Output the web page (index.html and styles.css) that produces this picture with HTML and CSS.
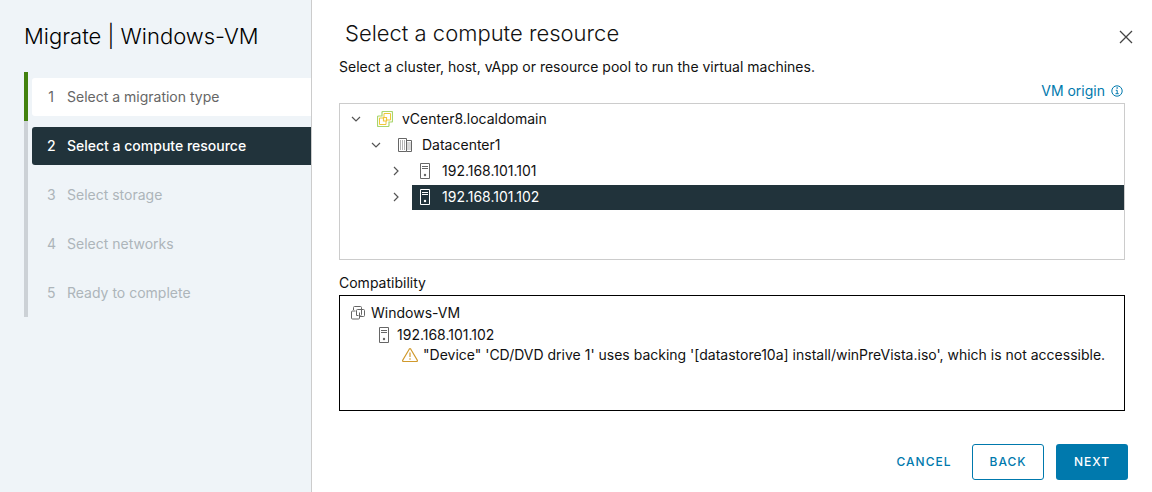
FILE: index.html
```html
<!DOCTYPE html>
<html lang="en">
<head>
<meta charset="utf-8">
<meta name="viewport" content="width=device-width, initial-scale=1">
<title>Migrate | Windows-VM</title>
<link rel="stylesheet" href="styles.css">
</head>
<body>
<svg class="sprite" aria-hidden="true">
  <symbol id="host" viewBox="0 0 16 16"><path d="M3.500 .5h9v15h-9z" fill="none" stroke="currentColor"/><path d="M5 3.500h6M5 5.500h6" stroke="currentColor"/><circle cx="8" cy="12" r="1.200" fill="currentColor"/></symbol>
  <symbol id="down" viewBox="0 0 10 10"><path d="M1 3l4 4 4-4" fill="none" stroke="currentColor" stroke-width="1.200"/></symbol>
  <symbol id="right" viewBox="0 0 10 10"><path d="M3 1l4 4-4 4" fill="none" stroke="currentColor" stroke-width="1.200"/></symbol>
</svg>
<div class="wizard">
  <aside class="sidebar">
    <h1 class="wizard-title">Migrate | Windows-VM</h1>
    <ol class="steps">
      <li class="step done"><button class="step-link" type="button"><span class="num">1</span>Select a migration type</button></li>
      <li class="step current"><button class="step-link" type="button" aria-current="step"><span class="num">2</span>Select a compute resource</button></li>
      <li class="step"><button class="step-link" type="button" disabled><span class="num">3</span>Select storage</button></li>
      <li class="step"><button class="step-link" type="button" disabled><span class="num">4</span>Select networks</button></li>
      <li class="step"><button class="step-link" type="button" disabled><span class="num">5</span>Ready to complete</button></li>
    </ol>
  </aside>
  <main class="page">
    <header class="page-head">
      <h2 class="page-title">Select a compute resource</h2>
      <button class="close" type="button" aria-label="Close"><svg width="14" height="14" viewBox="0 0 14 14"><path d="M1 1l12 12M13 1L1 13" stroke="currentColor" stroke-width="1.300"/></svg></button>
    </header>
    <section class="content">
      <p class="intro">Select a cluster, host, vApp or resource pool to run the virtual machines.</p>
      <div class="origin"><a class="origin-link" href="#origin">VM origin <svg width="12" height="12" viewBox="0 0 12 12" fill="none" stroke="currentColor"><circle cx="6" cy="6" r="5.200"/><path d="M4.800 5.300h1.400v3.200M4.500 8.700h3.200"/><path d="M5.500 3h1.300" stroke-width="1.300"/></svg></a></div>
      <ul class="tree" role="tree" aria-label="Inventory">
        <li class="node" role="treeitem" aria-expanded="true">
          <button class="toggle" type="button" aria-label="Collapse vCenter8.localdomain"><svg width="10" height="10"><use href="#down"/></svg></button>
          <span class="label"><svg width="16" height="16" viewBox="0 0 16 16" fill="none"><path d="M5 1.500q0-1 1-1h8.500q1 0 1 1V10q0 1-1 1H12v3.500q0 1-1 1H1.500q-1 0-1-1V6q0-1 1-1H5z" stroke="#a9d66c" stroke-width="1.200"/><path d="M9.500 9h4V2.500H7V6.500" stroke="#efc63a"/><path d="M6 7H2.500v6.500H9V10" stroke="#efc63a"/><path d="M6.500 6.500h3v3.500h-3z" stroke="#efc63a" stroke-width="1.200"/></svg>vCenter8.localdomain</span>
        </li>
        <li class="node level-2" role="treeitem" aria-expanded="true">
          <button class="toggle" type="button" aria-label="Collapse Datacenter1"><svg width="10" height="10"><use href="#down"/></svg></button>
          <span class="label icon-gray"><svg width="16" height="16" viewBox="0 0 16 16" fill="none" stroke="currentColor"><path d="M9.500 14.500h-8V1.500h8zM9.500 3.500h5v11h-5"/><path d="M3.500 3.500v9M5.500 3.500v9M7.500 3.500v9M11 5.500v7M13 5.500v7" stroke-dasharray="1 1"/></svg><span class="text">Datacenter1</span></span>
        </li>
        <li class="node level-3" role="treeitem" aria-expanded="false">
          <button class="toggle" type="button" aria-label="Expand 192.168.101.101"><svg width="10" height="10"><use href="#right"/></svg></button>
          <span class="label icon-gray"><svg width="16" height="16"><use href="#host"/></svg><span class="text">192.168.101.101</span></span>
        </li>
        <li class="node level-3 selected" role="treeitem" aria-expanded="false" aria-selected="true">
          <button class="toggle" type="button" aria-label="Expand 192.168.101.102"><svg width="10" height="10"><use href="#right"/></svg></button>
          <span class="label"><svg width="16" height="16"><use href="#host"/></svg>192.168.101.102</span>
        </li>
      </ul>
      <h3 class="compat-title">Compatibility</h3>
      <div class="compat">
        <div class="result result-vm"><svg class="gray" width="14" height="14" viewBox="0 0 14 14" fill="none" stroke="currentColor"><path d="M2.500 4V1.500q0-1 1-1h6q1 0 1 1V3"/><path d="M4.500 5h-3q-1 0-1 1v6q0 1 1 1h6q1 0 1-1V6.500"/><path d="M8.500 10.500h4q1 0 1-1v-5q0-1-1-1H6.500q-1 0-1 1v5h2M10.500 4v4.500q0 1-1 1"/></svg>Windows-VM</div>
        <div class="result result-host"><svg class="gray" width="16" height="16"><use href="#host"/></svg>192.168.101.102</div>
        <div class="result result-warning"><svg class="warn" width="16" height="14" viewBox="0 0 16 14" fill="none" stroke="currentColor"><path d="M7.200 1.200q.8-1.200 1.600 0l6.500 11q.4 1.300-.8 1.300h-13q-1.200 0-.8-1.300z" stroke-width="1.200"/><path d="M8 4.500v4.500M8 10.300v1.500" stroke-width="1.200"/></svg>"Device" 'CD/DVD drive 1' uses backing '[datastore10a] install/winPreVista.iso', which is not accessible.</div>
      </div>
    </section>
    <footer class="actions">
      <button class="btn btn-link" type="button">CANCEL</button>
      <button class="btn btn-outline" type="button">BACK</button>
      <button class="btn btn-primary" type="button">NEXT</button>
    </footer>
  </main>
</div>
</body>
</html>
```
FILE: styles.css
```css
* { box-sizing: border-box; }
body {
  margin: 0;
  background: #fff;
  color: #111;
  font: 14px/20px Inter, "Noto Sans", sans-serif;
}
button { font: inherit; color: inherit; background: none; border: 0; padding: 0; }
h1, h2, h3, p, ol, ul { margin: 0; padding: 0; font-weight: 400; }
ol, ul { list-style: none; }
svg { flex: none; display: block; }
.sprite { display: none; }

.wizard { display: grid; grid-template-columns: 312px minmax(0, 1fr); min-height: 100vh; }

.sidebar { background: #eff4f8; border-right: 1px solid #ccc; padding: 20px 0 0 24px; }
.wizard-title { font-size: 22px; font-weight: 300; line-height: 32px; color: #000; }
.steps { margin-top: 20px; }
.step { border-left: 4px solid #ccd1d6; padding: 6px 0 5px 4px; }
.step.done { border-left-color: #42810e; }
.step-link {
  display: flex;
  align-items: center;
  gap: 12px;
  width: 100%;
  height: 38px;
  padding-left: 15px;
  border-radius: 3px 0 0 3px;
  text-align: left;
  color: #adb5ba;
}
.num { width: 8px; text-align: center; }
.done .step-link { background: #fff; color: #666; }
.current .step-link { background: #21333b; color: #fff; font-weight: 500; }

.page { display: flex; flex-direction: column; }
.page-head { display: flex; justify-content: space-between; padding: 18px 16px 0 33px; }
.page-title { font-size: 22px; font-weight: 300; line-height: 30px; }
.close { display: grid; place-items: center; width: 20px; height: 38px; color: #444; }
.content { flex: 1; padding: 0 27px; }
.intro { margin-top: 1px; }
.origin { display: flex; justify-content: flex-end; margin: 4px 2px 2px 0; }
.origin-link { display: flex; align-items: center; gap: 6px; color: #0079ad; text-decoration: none; }

.tree { min-height: 157px; border: 1px solid #ccc; padding: 2px 0; }
.node { display: flex; align-items: center; height: 26px; padding-left: 8px; }
.level-2 { padding-left: 28px; }
.level-3 { padding-left: 48px; }
.toggle { display: grid; place-items: center; width: 16px; height: 24px; color: #555; }
.label { display: flex; flex: 1; align-items: center; gap: 9px; height: 25px; margin-left: 8px; padding-left: 5px; }
.icon-gray { color: #666; }
.text { color: #111; }
.selected .label { background: #21333b; color: #fff; }

.compat-title { margin: 13px 0 2px; font-size: 14px; line-height: 20px; }
.compat { min-height: 116px; border: 1px solid #000; padding: 6px 11px; }
.result { display: flex; align-items: center; gap: 5px; min-height: 22px; }
.result-vm { gap: 6px; }
.result-host { padding-left: 25px; }
.result-warning { padding-left: 51px; line-height: 18px; min-height: 18px; }
.gray { color: #666; }
.warn { color: #d0992c; }

.actions { display: flex; justify-content: flex-end; gap: 12px; padding: 12px 24px; }
.btn { min-width: 72px; height: 36px; border-radius: 3px; font-size: 12px; font-weight: 500; letter-spacing: 1px; color: #0079ad; }
.btn-link { padding: 0 8px; }
.btn-outline { border: 1px solid #0079ad; }
.btn-primary { background: #0079ad; color: #fff; }
```
